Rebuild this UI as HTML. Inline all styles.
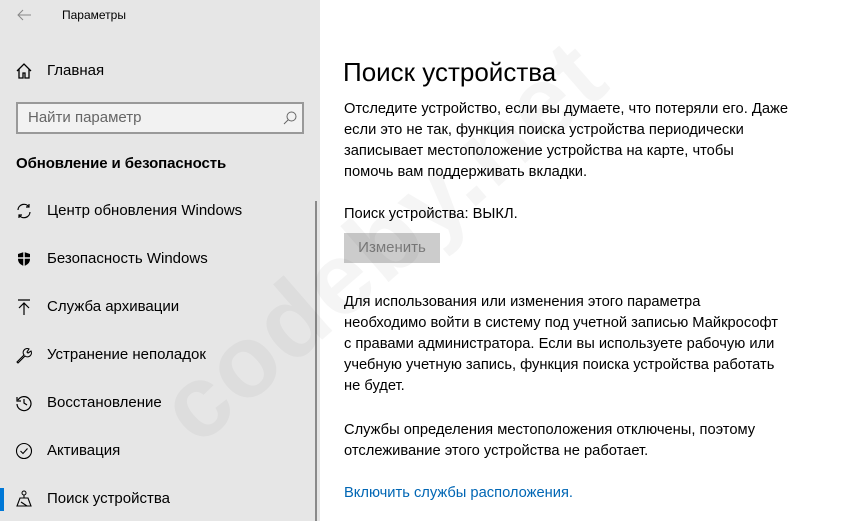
<!DOCTYPE html>
<html><head><meta charset="utf-8"><style>
*{margin:0;padding:0;box-sizing:border-box}
body{width:848px;height:521px;overflow:hidden;background:#fff;font-family:"Liberation Sans",sans-serif;color:#000;position:relative}
#left{position:absolute;left:0;top:0;width:320px;height:521px;background:#e6e6e6}
.t{position:absolute;white-space:nowrap;line-height:20px}
.nav{position:absolute;left:47px;font-size:15px;white-space:nowrap;line-height:20px}
.ic{position:absolute;left:15px;width:18px;height:18px}
#right .t{font-size:14.7px;left:344px}
#wm{position:absolute;left:195px;top:445px;width:0;height:0;transform:rotate(-41deg);transform-origin:0 0;z-index:5}
#wm span{position:absolute;left:0;bottom:-20px;font-size:102px;font-weight:bold;color:rgba(0,0,0,0.04);white-space:nowrap;letter-spacing:2px;line-height:1}
</style></head><body>
<div id="left">
<svg style="position:absolute;left:16px;top:8px" width="16" height="14" viewBox="0 0 16 14"><path d="M15 7H2M7 2L2 7l5 5" stroke="#888" fill="none" stroke-width="1"/></svg>
<div class="t" style="left:62px;top:5px;font-size:12px">Параметры</div>
<svg class="ic" style="top:62px" viewBox="0 0 18 18"><path d="M2 9L9 2l7 7M4 7v9h4v-5h2v5h4V7" stroke="#000" fill="none" stroke-width="1.3"/></svg>
<div class="nav" style="top:61px">Главная</div>
<div style="position:absolute;left:16px;top:102px;width:288px;height:32px;border:2px solid #999;background:#f2f2f2"></div>
<div class="t" style="left:28px;top:108px;font-size:15px;color:#666">Найти параметр</div>
<svg style="position:absolute;left:282px;top:110px" width="16" height="16" viewBox="0 0 16 16"><circle cx="9.5" cy="6.5" r="4.5" stroke="#666" fill="none"/><path d="M6.5 9.5L2 14" stroke="#666"/></svg>
<div class="t" style="left:16px;top:154px;font-size:15px;font-weight:bold;letter-spacing:-0.1px">Обновление и безопасность</div>
<svg class="ic" style="top:202px" viewBox="0 0 18 18"><path d="M3 8a6 6 0 0 1 11-3M15 10a6 6 0 0 1-11 3M14 2v3h-3M4 16v-3h3" stroke="#000" fill="none" stroke-width="1.2"/></svg>
<div class="nav" style="top:201px">Центр обновления Windows</div>
<svg class="ic" style="top:250px" viewBox="0 0 18 18"><path d="M9 2l6 2v5c0 4-3 6-6 7-3-1-6-3-6-7V4z" fill="#000"/><path d="M9 2v14M3 8h12" stroke="#e6e6e6" stroke-width="1.5"/></svg>
<div class="nav" style="top:249px">Безопасность Windows</div>
<svg class="ic" style="top:298px" viewBox="0 0 18 18"><path d="M3 2h12M9 17V5M4 10l5-5 5 5" stroke="#000" fill="none" stroke-width="1.2"/></svg>
<div class="nav" style="top:297px">Служба архивации</div>
<svg class="ic" style="top:346px" viewBox="0 0 18 18"><path d="M2 16l7-7a4 4 0 0 1 5-6l-2 3 1 1 3-2a4 4 0 0 1-6 5l-7 7z" stroke="#000" fill="none" stroke-width="1.1"/></svg>
<div class="nav" style="top:345px">Устранение неполадок</div>
<svg class="ic" style="top:394px" viewBox="0 0 18 18"><path d="M3 6a7 7 0 1 1-1 4M2 3v4h4M9 5v4l3 2" stroke="#000" fill="none" stroke-width="1.2"/></svg>
<div class="nav" style="top:393px">Восстановление</div>
<svg class="ic" style="top:442px" viewBox="0 0 18 18"><circle cx="9" cy="9" r="7.5" stroke="#000" fill="none" stroke-width="1.1"/><path d="M5.5 9l2.5 2.5 4.5-5" stroke="#000" fill="none" stroke-width="1.1"/></svg>
<div class="nav" style="top:441px">Активация</div>
<div style="position:absolute;left:0;top:488px;width:4px;height:23px;background:#0078d7"></div>
<svg class="ic" style="top:490px" viewBox="0 0 18 18"><circle cx="9" cy="3" r="2" stroke="#000" fill="none"/><path d="M9 5v3M5 8h8l3 8H2zM2 16h14M6 12l6 4" stroke="#000" fill="none" stroke-width="1.1"/></svg>
<div class="nav" style="top:489px">Поиск устройства</div>
<div style="position:absolute;left:315px;top:201px;width:2px;height:320px;background:#8a8a8a"></div>
</div>
<div id="right">
<div class="t" style="left:343px;top:56px;font-size:26px;line-height:32px">Поиск устройства</div>
<div class="t" style="top:99px;line-height:21px">Отследите устройство, если вы думаете, что потеряли его. Даже<br>если это не так, функция поиска устройства периодически<br>записывает местоположение устройства на карте, чтобы<br>помочь вам поддерживать вкладки.</div>
<div class="t" style="top:204px">Поиск устройства: ВЫКЛ.</div>
<div style="position:absolute;left:344px;top:233px;width:96px;height:30px;background:#ccc;color:#7a7a7a;font-size:15px;line-height:30px;text-align:center">Изменить</div>
<div class="t" style="top:292px;line-height:21px">Для использования или изменения этого параметра<br>необходимо войти в систему под учетной записью Майкрософт<br>с правами администратора. Если вы используете рабочую или<br>учебную учетную запись, функция поиска устройства работать<br>не будет.</div>
<div class="t" style="top:420px;line-height:21px">Службы определения местоположения отключены, поэтому<br>отслеживание этого устройства не работает.</div>
<div class="t" style="top:483px;color:#0066b4">Включить службы расположения.</div>
</div>
<div id="wm"><span>codeby.net</span></div>
</body></html>
